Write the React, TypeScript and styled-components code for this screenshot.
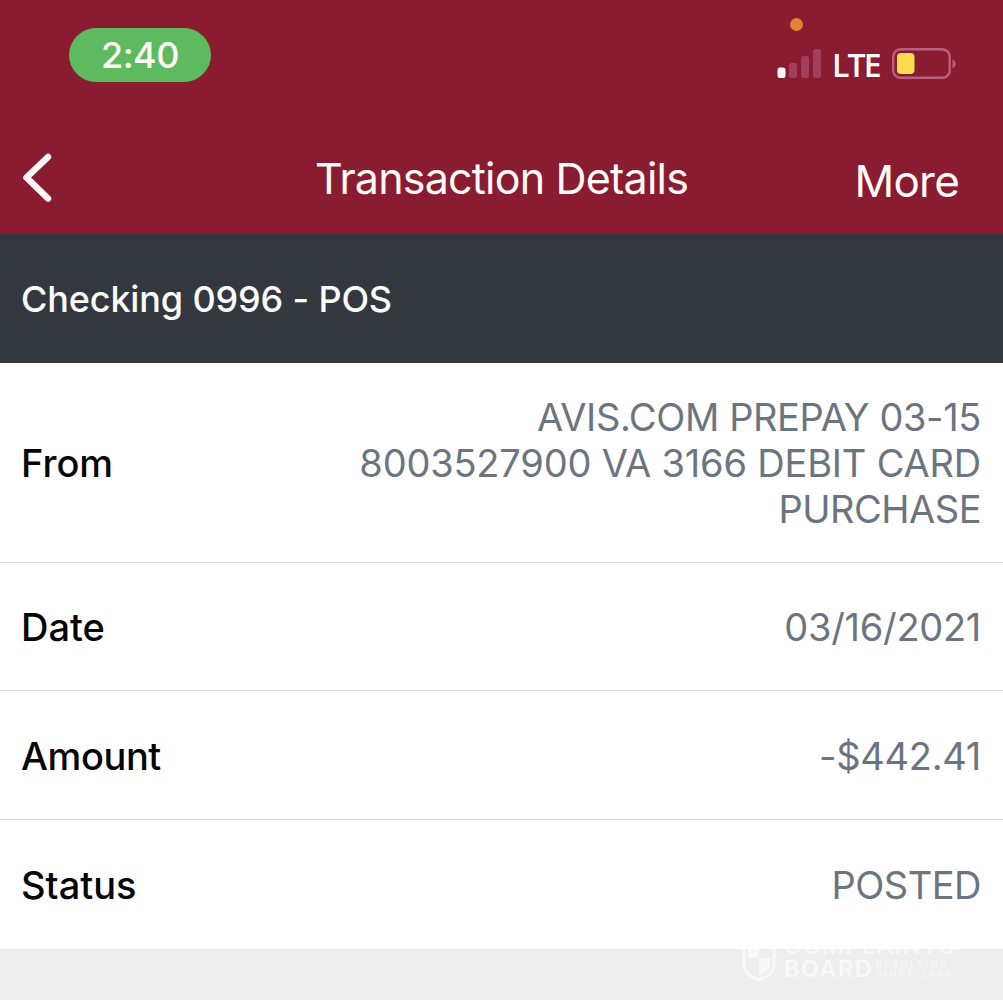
import React from 'react'
import styled, { createGlobalStyle } from 'styled-components'

const GlobalStyle = createGlobalStyle`
  * {
    box-sizing: border-box;
  }
  body {
    margin: 0;
    background: #eeeeee;
    font-family: Inter, 'Liberation Sans', sans-serif;
  }
`

const Screen = styled.div`
  display: flex;
  flex-direction: column;
  width: 1003px;
  height: 1000px;
  overflow: hidden;
`
const Header = styled.header`
  height: 234px;
  background: #8a1c32;
  color: #fffaf8;
`
const StatusBar = styled.div`
  display: flex;
  justify-content: space-between;
  align-items: flex-start;
  height: 122px;
  padding: 28px 45px 0 69px;
`
const TimePill = styled.div`
  display: flex;
  align-items: center;
  justify-content: center;
  width: 142px;
  height: 54px;
  border-radius: 27px;
  background: #5dba5f;
  font-size: 36px;
  font-weight: 500;
  letter-spacing: -0.5px;
`
const Indicators = styled.div`
  position: relative;
  display: flex;
  align-items: flex-start;
  padding-top: 20px;
`
const MicDot = styled.span`
  position: absolute;
  top: -10px;
  left: 13px;
  width: 13px;
  height: 13px;
  border-radius: 50%;
  background: #e08434;
`
const Network = styled.span`
  margin: -3px 0 0 10px;
  width: 60px;
  font-family: 'Open Sans', sans-serif;
  font-size: 32px;
  font-weight: 600;
  line-height: 40px;
  letter-spacing: -1.9px;
`
const NavBar = styled.nav`
  display: grid;
  grid-template-columns: 1fr auto 1fr;
  align-items: center;
  height: 112px;
  padding: 0 43px 0 21px;
`
const BackButton = styled.button`
  justify-self: start;
  width: 34px;
  height: 54px;
  padding: 0;
  border: 0;
  background: none;
`
const Title = styled.h1`
  margin: 0 0 0 22px;
  font-size: 43px;
  font-weight: 400;
  letter-spacing: -0.8px;
`
const MoreButton = styled.button`
  justify-self: end;
  margin: 5px 1px 0 0;
  padding: 0;
  border: 0;
  background: none;
  color: inherit;
  font: inherit;
  font-size: 44px;
  letter-spacing: -0.8px;
`
const AccountBar = styled.div`
  display: flex;
  align-items: center;
  height: 129px;
  padding: 0 21px;
  background: #33383e;
  color: #fafcfd;
  font-size: 36px;
  font-weight: 450;
  letter-spacing: -0.15px;
`
const Row = styled.div<{ $height: number, $top?: number, $last?: boolean }>`
  display: flex;
  align-items: center;
  justify-content: space-between;
  height: ${p => p.$height}px;
  padding: ${p => p.$top || 0}px 22px 0 21px;
  background: #fff;
  border-bottom: ${p => (p.$last ? 'none' : '1px solid #d4d5d6')};
`
const Label = styled.span<{ $spacing?: number }>`
  color: #060606;
  font-size: 38px;
  font-weight: 500;
  letter-spacing: ${p => p.$spacing || 0}px;
`
const Value = styled.span`
  display: flex;
  flex-direction: column;
  align-items: flex-end;
`
const Line = styled.span<{ $spacing?: number }>`
  color: #6c757f;
  font-size: 38px;
  line-height: 46px;
  letter-spacing: ${p => p.$spacing || 0}px;
  white-space: nowrap;
`
const Footer = styled.footer`
  display: flex;
  justify-content: flex-end;
  flex: 1;
  overflow: hidden;
  padding-right: 46px;
  background: #eeeeee;
`
const Watermark = styled.div`
  display: flex;
  width: 215px;
  margin-top: -19px;
  color: #f8f8f8;
`
const Brand = styled.div`
  margin: 4px 0 0 8px;
  font-size: 23.5px;
  font-weight: 600;
  line-height: 23px;
  letter-spacing: 1.4px;
`
const BrandRow = styled.div`
  display: flex;
  align-items: center;
`
const Tagline = styled.div`
  margin-left: 3px;
  font-size: 9px;
  font-weight: 500;
  line-height: 10px;
  letter-spacing: 2.5px;
  white-space: nowrap;
`

const SignalIcon = () => (
  <svg width="45" height="31" viewBox="0 0 45 31">
    <rect x="0.5" y="19.5" width="8" height="10.5" rx="2.5" fill="#fffaf8" />
    <g fill="#a13f5e">
      <rect x="12" y="15" width="8" height="15" rx="2.5" />
      <rect x="24" y="8" width="8" height="22" rx="2.5" />
      <rect x="36" y="1" width="8" height="29" rx="2.5" />
    </g>
  </svg>
)

const BatteryIcon = () => (
  <svg width="66" height="31" viewBox="0 0 66 31">
    <rect x="1.2" y="1.2" width="56.5" height="28.6" rx="7.5" fill="none" stroke="#b9607c" strokeWidth="2.4" />
    <rect x="5" y="5" width="17.5" height="21" rx="4" fill="#f8dc4a" />
    <path d="M60.5 11.5c4.2 1 4.2 7.5 0 8.5z" fill="#b9607c" />
  </svg>
)

const ShieldIcon = () => (
  <svg width="34" height="52" viewBox="0 0 34 52">
    <path d="M2 8 17 2l15 6v27c0 8-7 12-15 15C9 47 2 43 2 35z" fill="none" stroke="#f8f8f8" strokeWidth="3" />
    <path d="M6 12 17 8v20H6zM17 28h11v7c0 5-5 8-11 10z" fill="#f8f8f8" />
  </svg>
)

const App = () => (
  <>
    <GlobalStyle />
    <Screen>
      <Header>
        <StatusBar>
          <TimePill>2:40</TimePill>
          <Indicators>
            <MicDot />
            <SignalIcon />
            <Network>LTE</Network>
            <BatteryIcon />
          </Indicators>
        </StatusBar>
        <NavBar>
          <BackButton aria-label="Back">
            <svg width="34" height="54" viewBox="0 0 34 54">
              <path
                d="M27 6 5.5 26.5 27 47.5"
                fill="none"
                stroke="#fffaf8"
                strokeWidth="6.5"
                strokeLinecap="round"
                strokeLinejoin="round"
              />
            </svg>
          </BackButton>
          <Title>Transaction Details</Title>
          <MoreButton>More</MoreButton>
        </NavBar>
      </Header>
      <AccountBar>Checking 0996 - POS</AccountBar>
      <Row $height={200}>
        <Label>From</Label>
        <Value>
          <Line $spacing={-0.38}>AVIS.COM PREPAY 03-15</Line>
          <Line $spacing={-0.2}>8003527900 VA 3166 DEBIT CARD</Line>
          <Line $spacing={-0.5}>PURCHASE</Line>
        </Value>
      </Row>
      <Row $height={128}>
        <Label>Date</Label>
        <Value>
          <Line $spacing={-0.3}>03/16/2021</Line>
        </Value>
      </Row>
      <Row $height={129} $top={1}>
        <Label $spacing={-0.4}>Amount</Label>
        <Value>
          <Line $spacing={-0.3}>-$442.41</Line>
        </Value>
      </Row>
      <Row $height={129} $last>
        <Label>Status</Label>
        <Value>
          <Line $spacing={-0.5}>POSTED</Line>
        </Value>
      </Row>
      <Footer>
        <Watermark>
          <ShieldIcon />
          <Brand>
            <div>COMPLAINTS</div>
            <BrandRow>
              BOARD
              <Tagline>
                <div>RESOLVING</div>
                <div>SINCE 2004</div>
              </Tagline>
            </BrandRow>
          </Brand>
        </Watermark>
      </Footer>
    </Screen>
  </>
)

export default App
